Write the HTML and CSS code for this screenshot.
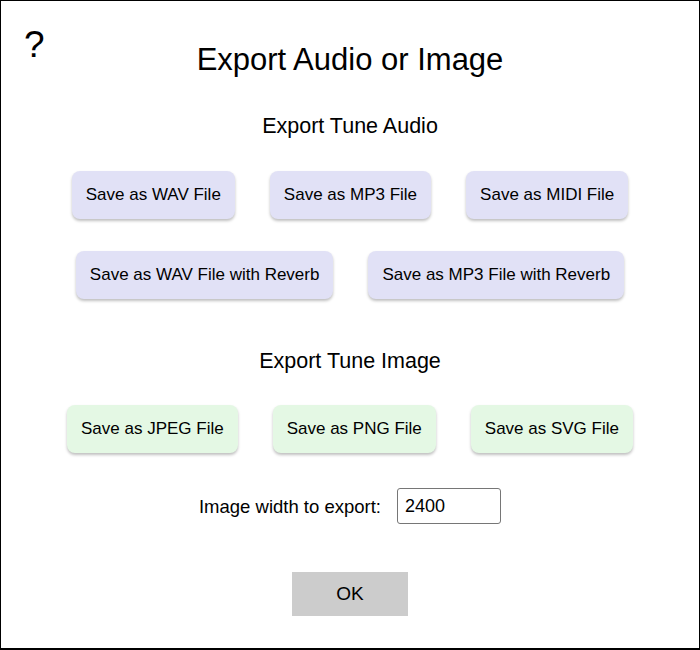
FILE: index.html
```html
<!DOCTYPE html>
<html>
<head>
<meta charset="utf-8">
<link rel="stylesheet" href="styles.css">
</head>
<body>
<div class="dialog">
  <span class="help">?</span>
  <h1 class="title">Export Audio or Image</h1>
  <h2 class="section-title first">Export Tune Audio</h2>
  <div class="btn-row">
    <button class="btn audio">Save as WAV File</button>
    <button class="btn audio">Save as MP3 File</button>
    <button class="btn audio">Save as MIDI File</button>
  </div>
  <div class="btn-row second">
    <button class="btn audio">Save as WAV File with Reverb</button>
    <button class="btn audio">Save as MP3 File with Reverb</button>
  </div>
  <h2 class="section-title image-title">Export Tune Image</h2>
  <div class="btn-row">
    <button class="btn image">Save as JPEG File</button>
    <button class="btn image">Save as PNG File</button>
    <button class="btn image">Save as SVG File</button>
  </div>
  <div class="width-row">
    <label class="width-label" for="imgwidth">Image width to export:</label>
    <input class="width-input" id="imgwidth" type="text" value="2400">
  </div>
  <div class="ok-row">
    <button class="ok-btn">OK</button>
  </div>
</div>
</body>
</html>
```

FILE: styles.css
```css
html, body {
  margin: 0;
  padding: 0;
  background: #fff;
}

.dialog {
  position: relative;
  box-sizing: border-box;
  width: 700px;
  height: 650px;
  border: 1px solid #000;
  border-bottom-width: 2px;
  font-family: "Liberation Sans", Arial, Helvetica, sans-serif;
  color: #000;
  display: flex;
  flex-direction: column;
  align-items: center;
}

.help {
  position: absolute;
  left: 23px;
  top: 25px;
  font-size: 37px;
  line-height: 37px;
}

.title {
  margin: 41px 0 0;
  font-size: 31px;
  line-height: 36px;
  font-weight: normal;
}

.section-title {
  margin: 36px 0 0;
  font-size: 21.5px;
  line-height: 24px;
  font-weight: normal;
}

.section-title.image-title {
  margin-top: 50px;
}

.btn-row {
  display: flex;
  justify-content: center;
  gap: 35px;
  margin-top: 33px;
}

.btn-row.second {
  margin-top: 32px;
}

.image-title + .btn-row {
  margin-top: 32px;
}

.btn {
  font-family: inherit;
  font-size: 17px;
  line-height: 20px;
  height: 48px;
  padding: 14px 14px;
  border: none;
  border-radius: 8px;
  color: #000;
  box-shadow: 0 2px 3px rgba(0, 0, 0, 0.25);
}

.btn.audio {
  background: #e1e1f6;
}

.btn.image {
  background: #e4f8e4;
}

.width-row {
  display: flex;
  align-items: center;
  gap: 16px;
  margin-top: 35px;
}

.width-label {
  font-size: 18.5px;
  line-height: 22px;
  padding-top: 2px;
}

.width-input {
  box-sizing: border-box;
  width: 104px;
  height: 36px;
  padding: 0 7px;
  border: 1px solid #767676;
  border-radius: 3px;
  font-family: inherit;
  font-size: 18px;
  color: #000;
  background: #fff;
}

.ok-row {
  margin-top: 48px;
}

.ok-btn {
  width: 116px;
  height: 44px;
  border: none;
  border-radius: 0;
  background: #cccccc;
  font-family: inherit;
  font-size: 19px;
  color: #000;
  padding: 0;
}
```
